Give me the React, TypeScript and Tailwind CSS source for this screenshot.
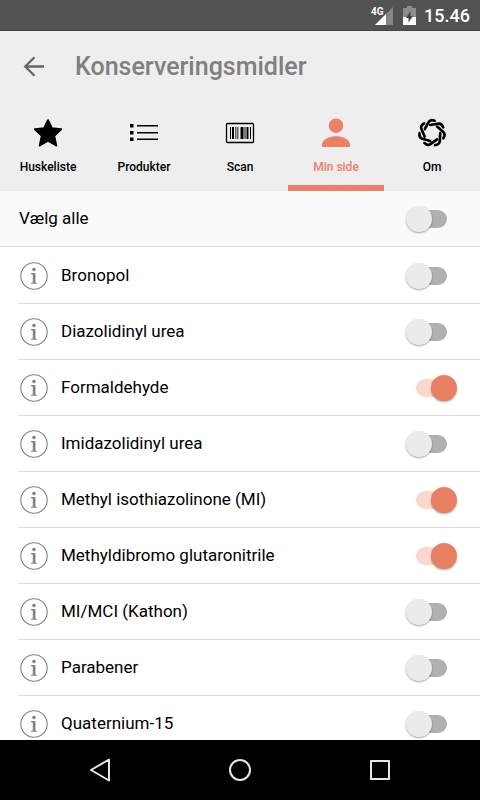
import { useState, type ReactNode } from 'react';

const initialItems = [
  { name: 'Bronopol', on: false },
  { name: 'Diazolidinyl urea', on: false },
  { name: 'Formaldehyde', on: true },
  { name: 'Imidazolidinyl urea', on: false },
  { name: 'Methyl isothiazolinone (MI)', on: true },
  { name: 'Methyldibromo glutaronitrile', on: true },
  { name: 'MI/MCI (Kathon)', on: false },
  { name: 'Parabener', on: false },
  { name: 'Quaternium-15', on: false },
];

function StatusBar() {
  return (
    <div className="flex h-[31px] shrink-0 items-center justify-end border-b border-[#454545] bg-[#525252] pt-px pr-[10px] text-white">
      <svg className="mr-[10px]" width="23" height="20" viewBox="0 0 23 20" aria-label="4G">
        <path d="M23 1v18H5z" fill="#868686" />
        <path d="M16 8v11H5z" fill="#fff" />
        <path d="M0 0h12v10H0z" fill="#525252" />
        <text x="1" y="9" fill="#fff" fontFamily="Roboto, sans-serif" fontSize="10" fontWeight="700">4G</text>
      </svg>
      <svg className="mr-2" width="13" height="20" viewBox="0 0 13 20">
        <path d="M4 0h5v2h4v9H0V2h4z" fill="#8c8c8c" />
        <path d="M0 11h13v8H0z" fill="#fff" />
        <path d="M7.500 5v5h2.500L5.500 16.500V12H3z" fill="#454545" />
      </svg>
      <span className="text-lg font-medium leading-none">15.46</span>
    </div>
  );
}

function StarIcon() {
  return (
    <svg width="30" height="30" viewBox="0 0 30 30">
      <path
        d="M15 2.200l3.800 8 9.300 1-6.900 6.500 2 9.700L15 22.700l-8.200 4.700 2-9.700-6.900-6.500 9.300-1z"
        fill="currentColor"
        stroke="currentColor"
        strokeWidth="2"
        strokeLinejoin="round"
      />
    </svg>
  );
}

function ListIcon() {
  return (
    <svg width="30" height="30" viewBox="0 0 30 30" fill="currentColor">
      <path d="M1 6h3.500v3.500H1zM1 13h3.500v3.500H1zM1 19.500h3.500V23H1z" />
      <path d="M8 7h21v1.400H8zM8 14h21v1.400H8zM8 20.500h21v1.400H8z" />
    </svg>
  );
}

function BarcodeIcon() {
  return (
    <svg width="30" height="30" viewBox="0 0 30 30" fill="currentColor">
      <rect x="1.500" y="5.500" width="27" height="19" rx="1" fill="none" stroke="currentColor" strokeWidth="1.300" />
      <path d="M5 9h1v12H5zM7 9h2v12H7zM15.500 9h3v12h-3zM19.500 9h1v12h-1zM21.500 9h2v12h-2zM25 9h1v12h-1z" />
      <path d="M10 9h1v12h-1zM11.500 9h2v12h-2z" opacity="0.600" />
    </svg>
  );
}

function PersonIcon() {
  return (
    <svg width="30" height="30" viewBox="0 0 30 30" fill="currentColor">
      <circle cx="15" cy="7.700" r="7.200" />
      <path d="M1 29v-3.500C3 20.500 9 18.300 15 18.300s12 2.200 14 7.200V29z" />
    </svg>
  );
}

function WreathIcon() {
  const turns = [0, 1, 2, 3, 4, 5, 6];
  return (
    <svg width="30" height="30" viewBox="-15 -15 30 30" fill="none" strokeLinecap="round">
      {turns.map((n) => (
        <g key={n} transform={`rotate(${(n * 360) / 7})`}>
          {/* light edge keeps the overlapping strands apart */}
          <path d="M-7-4.500L-3.500-10.500" stroke="#eeeeee" strokeWidth="4.200" strokeLinecap="butt" />
          <path d="M-7.400-3.600L-3.400-10.800Q-1.700-13.800 2.600-12.200" stroke="currentColor" strokeWidth="2.700" />
        </g>
      ))}
    </svg>
  );
}

const tabs: { label: string; icon: ReactNode }[] = [
  { label: 'Huskeliste', icon: <StarIcon /> },
  { label: 'Produkter', icon: <ListIcon /> },
  { label: 'Scan', icon: <BarcodeIcon /> },
  { label: 'Min side', icon: <PersonIcon /> },
  { label: 'Om', icon: <WreathIcon /> },
];

function Switch({ id, checked, onChange }: { id: string; checked: boolean; onChange: (v: boolean) => void }) {
  return (
    <input
      id={id}
      type="checkbox"
      role="switch"
      checked={checked}
      onChange={(e) => onChange(e.target.checked)}
      className="relative h-[26px] w-[51px] shrink-0 cursor-pointer appearance-none before:absolute before:inset-x-[10px] before:inset-y-1 before:rounded-full before:bg-[#b0b0b0] after:absolute after:top-0 after:left-0 after:size-[26px] after:rounded-full after:bg-[#ebebeb] after:shadow-[0_1px_2px_rgba(0,0,0,0.35)] checked:before:bg-[#f8d8cf] checked:after:left-[25px] checked:after:bg-[#e88064]"
    />
  );
}

function InfoIcon() {
  return (
    <svg width="28" height="28" viewBox="0 0 28 28" fill="#808087">
      <circle cx="14" cy="14" r="13.200" fill="none" stroke="#808087" strokeWidth="1.100" />
      <circle cx="14" cy="7.500" r="1.800" />
      <path d="M11 11h4.400v9.400l1.600.5v.9h-6v-.9l1.800-.5v-8l-1.800-.5z" />
    </svg>
  );
}

export default function App() {
  const [activeTab, setActiveTab] = useState('Min side');
  const [items, setItems] = useState(initialItems);
  const allOn = items.every((item) => item.on);

  const toggle = (name: string, on: boolean) =>
    setItems(items.map((item) => (item.name === name ? { ...item, on } : item)));

  return (
    <div className="flex h-screen flex-col bg-white font-['Roboto',sans-serif] text-black">
      <StatusBar />

      <header className="shrink-0 bg-[#eeeeee]">
        <div className="flex h-[72px] items-center pl-[23px]">
          <button type="button" aria-label="Tilbage" className="mr-[30px] text-[#666666]">
            <svg width="22" height="22" viewBox="0 0 22 22" fill="none" stroke="currentColor" strokeWidth="2.300">
              <path d="M21 10.500H2.500M11.500 1.200L2.200 10.500l9.300 9.300" />
            </svg>
          </button>
          <h1 className="text-[25px] font-medium text-[#808080]">Konserveringsmidler</h1>
        </div>
        <nav className="grid h-[88px] grid-cols-5">
          {tabs.map((tab) => (
            <button
              key={tab.label}
              type="button"
              onClick={() => setActiveTab(tab.label)}
              className={`flex flex-col items-center border-b-6 pt-[15px] ${
                tab.label === activeTab ? 'border-[#ee8067] text-[#ee8067]' : 'border-transparent'
              }`}
            >
              {tab.icon}
              <span className="mt-[11px] text-xs leading-4 font-medium">{tab.label}</span>
            </button>
          ))}
        </nav>
      </header>

      <main className="min-h-0 flex-1 overflow-hidden">
        <div className="flex h-14 items-center justify-between border-b border-[#dedede] bg-[#fafafa] pr-[23px] pl-[19px]">
          <label htmlFor="all" className="text-[17px]">Vælg alle</label>
          <Switch id="all" checked={allOn} onChange={(on) => setItems(items.map((item) => ({ ...item, on })))} />
        </div>
        <ul className="pt-px pl-[19px]">
          {items.map((item) => (
            <li key={item.name} className="flex h-14 items-center border-b border-[#dedede] pr-[23px] pl-px">
              <button type="button" aria-label={`Info om ${item.name}`}>
                <InfoIcon />
              </button>
              <label htmlFor={item.name} className="ml-[13px] flex-1 text-[17px]">{item.name}</label>
              <Switch id={item.name} checked={item.on} onChange={(on) => toggle(item.name, on)} />
            </li>
          ))}
        </ul>
      </main>

      <footer className="flex h-[60px] shrink-0 items-center justify-center gap-[116px] bg-black text-[#e6e6e6]">
        <button type="button" aria-label="Tilbage">
          <svg width="24" height="24" viewBox="0 0 24 24" fill="none" stroke="currentColor" strokeWidth="2" strokeLinejoin="round">
            <path d="M21 1.500v21L3 12z" />
          </svg>
        </button>
        <button type="button" aria-label="Hjem">
          <svg width="24" height="24" viewBox="0 0 24 24" fill="none" stroke="currentColor" strokeWidth="2">
            <circle cx="12" cy="12" r="10" />
          </svg>
        </button>
        <button type="button" aria-label="Oversigt">
          <svg width="24" height="24" viewBox="0 0 24 24" fill="none" stroke="currentColor" strokeWidth="2" strokeLinejoin="round">
            <path d="M3 3h18v18H3z" />
          </svg>
        </button>
      </footer>
    </div>
  );
}
